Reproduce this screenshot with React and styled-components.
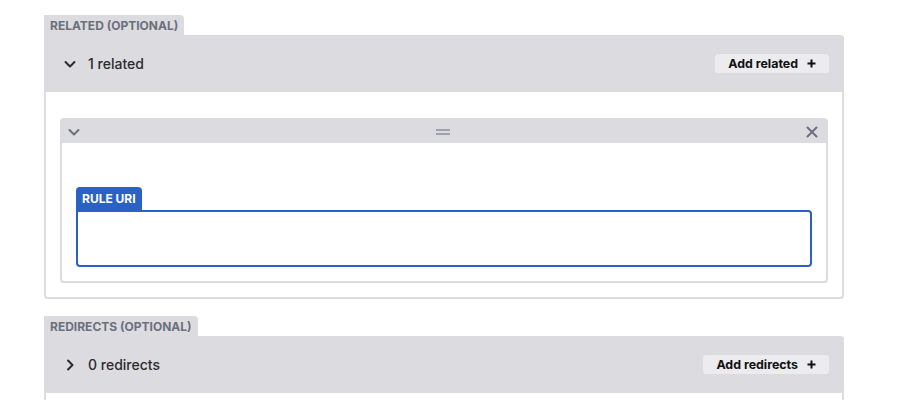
import React from "react";
import styled, { createGlobalStyle } from "styled-components";

const GlobalStyle = createGlobalStyle`
  body {
    margin: 0;
    padding: 0;
    background: #ffffff;
    font-family: Inter, "Liberation Sans", sans-serif;
    color: #2b2b2e;
  }
`;

const Page = styled.div`
  width: 800px;
  padding: 15px 0 0 44px;
`;

// 섹션 (라벨 + 박스)
const Section = styled.section`
  margin-bottom: 17px;
`;

const FieldLabel = styled.div`
  display: flex;
  align-items: center;
  width: fit-content;
  height: 20px;
  padding: 0 6px;
  background: #dcdbe0;
  color: #6b707c;
  font-size: 12px;
  font-weight: 700;
  border-top-right-radius: 4px;
`;

const Box = styled.div`
  border: 2px solid #dcdbe0;
  border-top: none;
  border-radius: 0 4px 4px 4px;
`;

const BoxHeader = styled.div`
  display: flex;
  align-items: center;
  justify-content: space-between;
  height: 57px;
  padding: 0 15px 0 20px;
  margin: 0 -2px;
  background: #dcdbe0;
  border-top-right-radius: 4px;
`;

const Toggle = styled.div`
  display: flex;
  align-items: center;
  gap: 12px;
  font-size: 14px;
  font-weight: 500;
  color: #2b2b2e;
`;

const AddButton = styled.button`
  display: flex;
  align-items: center;
  gap: 9px;
  height: 19px;
  padding: 0 13px;
  border: none;
  border-radius: 3px;
  background: #ececef;
  color: #111;
  font-family: inherit;
  font-size: 12.4px;
  font-weight: 700;
  cursor: pointer;
`;

const BoxBody = styled.div`
  padding: 26px 14px 14px;
`;

// 항목 카드
const Card = styled.div`
  border: 2px solid #dcdbe0;
  border-radius: 4px;
`;

const CardHeader = styled.div`
  display: flex;
  align-items: center;
  justify-content: space-between;
  height: 23px;
  padding: 0 8px 0 6px;
  background: #dcdbe0;
  color: #6b707c;
`;

const CardBody = styled.div`
  padding: 44px 14px 14px;
`;

const InputLabel = styled.div`
  display: flex;
  align-items: center;
  width: fit-content;
  height: 23px;
  padding: 0 6px;
  background: #2962c4;
  color: #fff;
  font-size: 12px;
  font-weight: 700;
  border-radius: 4px 4px 0 0;
`;

const Input = styled.input`
  display: block;
  box-sizing: border-box;
  width: 100%;
  height: 57px;
  margin: 0;
  border: 2px solid #2962c4;
  border-radius: 0 4px 4px 4px;
  outline: none;
  font-family: inherit;
  font-size: 14px;
`;

const Chevron = ({ dir = "down", color = "#2b2b2e", size = 12 }) => (
  <svg width={size} height={size} viewBox="0 0 12 12" fill="none">
    <path
      d={dir === "down" ? "M1.5 4 L6 8.5 L10.5 4" : "M4 1.5 L8.5 6 L4 10.5"}
      stroke={color}
      strokeWidth="2"
      strokeLinecap="round"
      strokeLinejoin="round"
    />
  </svg>
);

const Plus = () => (
  <svg width="9" height="9" viewBox="0 0 9 9">
    <path d="M4.5 0.5 V8.5 M0.5 4.5 H8.5" stroke="#111" strokeWidth="2" />
  </svg>
);

const Handle = () => (
  <svg width="14" height="6" viewBox="0 0 14 6">
    <path d="M0 1 H14 M0 5 H14" stroke="#8a909c" strokeWidth="1.5" />
  </svg>
);

const Close = () => (
  <svg width="12" height="12" viewBox="0 0 12 12">
    <path d="M1.5 1.5 L10.5 10.5 M10.5 1.5 L1.5 10.5" stroke="#6b707c" strokeWidth="2" strokeLinecap="round" />
  </svg>
);

function App() {
  return (
    <>
      <GlobalStyle />
      <Page>
        <Section>
          <FieldLabel>RELATED (OPTIONAL)</FieldLabel>
          <Box>
            <BoxHeader>
              <Toggle>
                <Chevron dir="down" />
                1 related
              </Toggle>
              <AddButton>
                Add related <Plus />
              </AddButton>
            </BoxHeader>
            <BoxBody>
              <Card>
                <CardHeader>
                  <Chevron dir="down" color="#6b707c" />
                  <Handle />
                  <Close />
                </CardHeader>
                <CardBody>
                  <InputLabel>RULE URI</InputLabel>
                  <Input />
                </CardBody>
              </Card>
            </BoxBody>
          </Box>
        </Section>

        <Section>
          <FieldLabel>REDIRECTS (OPTIONAL)</FieldLabel>
          <Box>
            <BoxHeader>
              <Toggle>
                <Chevron dir="right" />
                0 redirects
              </Toggle>
              <AddButton>
                Add redirects <Plus />
              </AddButton>
            </BoxHeader>
            <BoxBody />
          </Box>
        </Section>
      </Page>
    </>
  );
}

export default App;
